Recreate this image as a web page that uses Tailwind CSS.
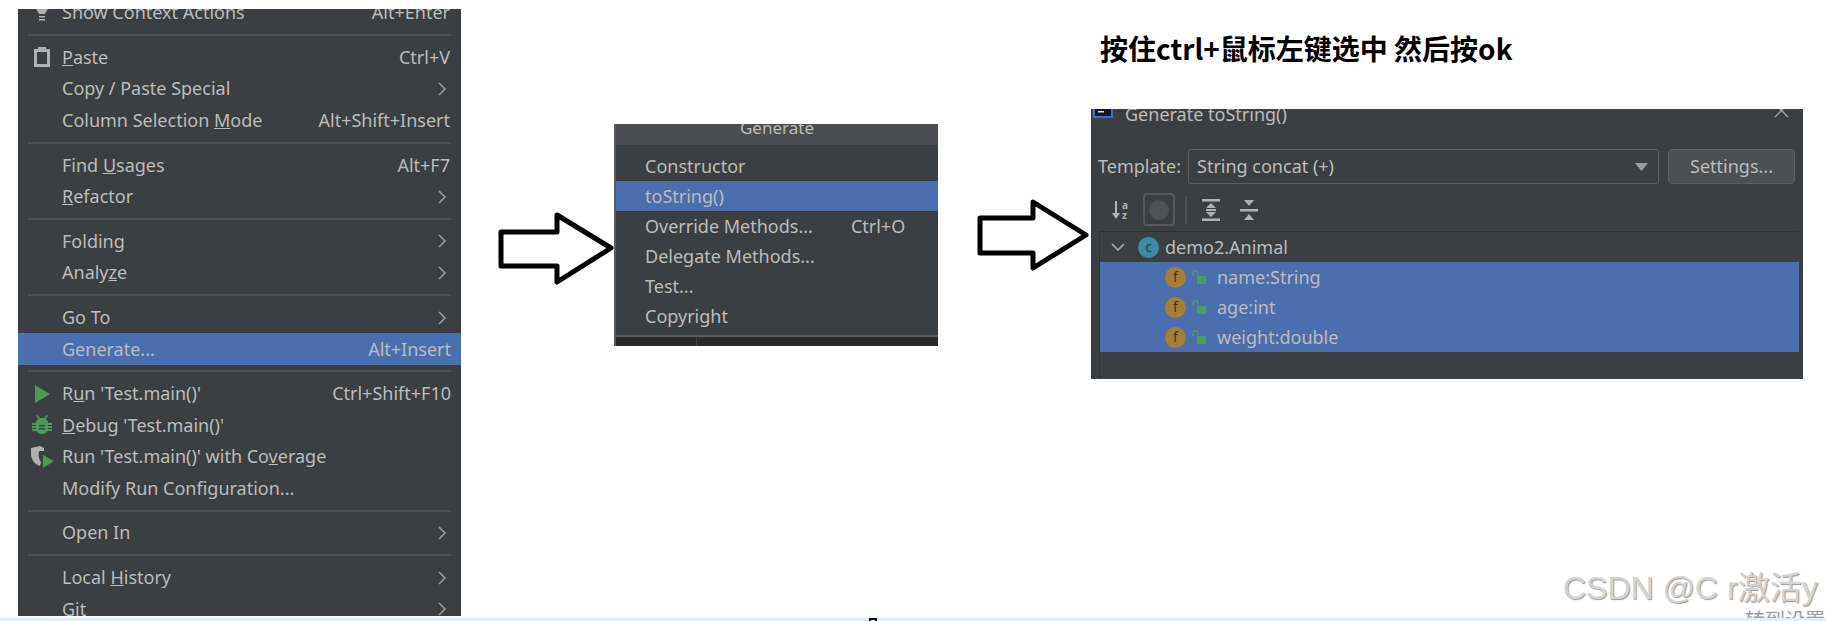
<!DOCTYPE html>
<html lang="zh">
<head>
    <meta charset="UTF-8">
    <title>Generate toString</title>
    <script src="https://cdn.jsdelivr.net/npm/@tailwindcss/browser@4"></script>
</head>
<body class="bg-white">
<div class="relative flex items-start w-[1826px] h-[621px] overflow-hidden bg-white font-['Noto_Sans','Noto_Sans_CJK_SC',sans-serif] text-[#bbbbbb] text-[18px]">

    <!-- context menu -->
    <div class="ml-[18px] mt-[9px] w-[443px] h-[607px] shrink-0 overflow-hidden bg-[#3c3f41]">
        <div class="mt-[-12px]">
            <div class="flex items-center h-[31.5px] pr-[11px]">
                <div class="w-[44px] pl-[4px] flex justify-center">
                    <svg width="16" height="22" viewBox="0 0 16 22"><path d="M1 3h14c0 4-3 6-4 9H5C4 9 1 7 1 3z" fill="#afb1b3"/><path d="M5 14h6v1.5H5zM5 17h6v1.5H5z" fill="#afb1b3"/></svg>
                </div>
                <span>Show Context Actions</span><span class="ml-auto">Alt+Enter</span>
            </div>
            <div class="h-[2px] mx-[10px] my-[5.6px] bg-[#515151]"></div>

            <div class="flex items-center h-[31.5px] pr-[11px]">
                <div class="w-[44px] pl-[4px] flex justify-center">
                    <svg width="16" height="20" viewBox="0 0 16 20"><path fill-rule="evenodd" d="M0 2h4V0h8v2h4v18H0zM3 5v12h10V5z" fill="#afb1b3"/></svg>
                </div>
                <span><u>P</u>aste</span><span class="ml-auto">Ctrl+V</span>
            </div>
            <div class="flex items-center h-[31.5px] pl-[44px] pr-[11px]">
                <span>Copy / Paste Special</span>
                <svg class="ml-auto mr-[3px]" width="9" height="14" viewBox="0 0 9 14" fill="none" stroke="#9a9c9e" stroke-width="1.5"><path d="M1 1l6 6-6 6"/></svg>
            </div>
            <div class="flex items-center h-[31.5px] pl-[44px] pr-[11px]">
                <span>Column Selection <u>M</u>ode</span><span class="ml-auto">Alt+Shift+Insert</span>
            </div>
            <div class="h-[2px] mx-[10px] my-[5.6px] bg-[#515151]"></div>

            <div class="flex items-center h-[31.5px] pl-[44px] pr-[11px]">
                <span>Find <u>U</u>sages</span><span class="ml-auto">Alt+F7</span>
            </div>
            <div class="flex items-center h-[31.5px] pl-[44px] pr-[11px]">
                <span><u>R</u>efactor</span>
                <svg class="ml-auto mr-[3px]" width="9" height="14" viewBox="0 0 9 14" fill="none" stroke="#9a9c9e" stroke-width="1.5"><path d="M1 1l6 6-6 6"/></svg>
            </div>
            <div class="h-[2px] mx-[10px] my-[5.6px] bg-[#515151]"></div>

            <div class="flex items-center h-[31.5px] pl-[44px] pr-[11px]">
                <span>Folding</span>
                <svg class="ml-auto mr-[3px]" width="9" height="14" viewBox="0 0 9 14" fill="none" stroke="#9a9c9e" stroke-width="1.5"><path d="M1 1l6 6-6 6"/></svg>
            </div>
            <div class="flex items-center h-[31.5px] pl-[44px] pr-[11px]">
                <span>Analy<u>z</u>e</span>
                <svg class="ml-auto mr-[3px]" width="9" height="14" viewBox="0 0 9 14" fill="none" stroke="#9a9c9e" stroke-width="1.5"><path d="M1 1l6 6-6 6"/></svg>
            </div>
            <div class="h-[2px] mx-[10px] my-[5.6px] bg-[#515151]"></div>

            <div class="flex items-center h-[31.5px] pl-[44px] pr-[11px]">
                <span>Go To</span>
                <svg class="ml-auto mr-[3px]" width="9" height="14" viewBox="0 0 9 14" fill="none" stroke="#9a9c9e" stroke-width="1.5"><path d="M1 1l6 6-6 6"/></svg>
            </div>
            <div class="flex items-center h-[31.5px] pl-[44px] pr-[10px] bg-[#4b6eaf]">
                <span>Generate...</span><span class="ml-auto">Alt+Insert</span>
            </div>
            <div class="h-[2px] mx-[10px] my-[5.6px] bg-[#515151]"></div>

            <div class="flex items-center h-[31.5px] pr-[10px]">
                <div class="w-[44px] pl-[4px] flex justify-center">
                    <svg width="16" height="18" viewBox="0 0 16 18"><path d="M1 0l15 9-15 9z" fill="#499c54"/></svg>
                </div>
                <span>R<u>u</u>n 'Test.main()'</span><span class="ml-auto">Ctrl+Shift+F10</span>
            </div>
            <div class="flex items-center h-[31.5px] pr-[11px]">
                <div class="w-[44px] pl-[4px] flex justify-center">
                    <svg width="20" height="20" viewBox="0 0 20 20"><path d="M5 0l3 3h4l3-3 1 1-2.500 3C15 5 16 6 16 7H4c0-1 1-2 2.500-3L4 1z" fill="#499c54"/><path fill-rule="evenodd" d="M0 8h4V7h12v1h4v2h-4v1h4v2h-4v1h4v2h-4.500c-1 2-3 3-5.500 3s-4.500-1-5.500-3H0v-2h4v-1H0v-2h4v-1H0zM7 10v1.500h6V10zM7 13v1.500h6V13z" fill="#499c54"/></svg>
                </div>
                <span><u>D</u>ebug 'Test.main()'</span>
            </div>
            <div class="flex items-center h-[31.5px] pr-[11px]">
                <div class="w-[44px] pl-[4px] flex justify-center">
                    <svg width="24" height="22" viewBox="0 0 24 22"><path d="M1 2l9-2 4 2v3h-4c-2 0-2 7 1 11l-1 4C4 18 1 13 1 8z" fill="#afb1b3"/><path d="M13 9l11 6-11 7z" fill="#499c54"/></svg>
                </div>
                <span>Run 'Test.main()' with Co<u>v</u>erage</span>
            </div>
            <div class="flex items-center h-[31.5px] pl-[44px] pr-[11px]">
                <span>Modify Run Configuration...</span>
            </div>
            <div class="h-[2px] mx-[10px] my-[5.6px] bg-[#515151]"></div>

            <div class="flex items-center h-[31.5px] pl-[44px] pr-[11px]">
                <span>Open In</span>
                <svg class="ml-auto mr-[3px]" width="9" height="14" viewBox="0 0 9 14" fill="none" stroke="#9a9c9e" stroke-width="1.5"><path d="M1 1l6 6-6 6"/></svg>
            </div>
            <div class="h-[2px] mx-[10px] my-[5.6px] bg-[#515151]"></div>

            <div class="flex items-center h-[31.5px] pl-[44px] pr-[11px]">
                <span>Local <u>H</u>istory</span>
                <svg class="ml-auto mr-[3px]" width="9" height="14" viewBox="0 0 9 14" fill="none" stroke="#9a9c9e" stroke-width="1.5"><path d="M1 1l6 6-6 6"/></svg>
            </div>
            <div class="flex items-center h-[31.5px] pl-[44px] pr-[11px]">
                <span>Git</span>
                <svg class="ml-auto mr-[3px]" width="9" height="14" viewBox="0 0 9 14" fill="none" stroke="#9a9c9e" stroke-width="1.5"><path d="M1 1l6 6-6 6"/></svg>
            </div>
        </div>
    </div>

    <!-- arrow 1 -->
    <svg class="ml-[37px] mt-[210px] shrink-0" width="119" height="78" viewBox="0 0 119 78" fill="#fff" stroke="#000" stroke-width="5" stroke-linejoin="round"><path d="M3 22h56V5l54 33-54 34V56H3z"/></svg>

    <!-- generate popup -->
    <div class="ml-[-3px] mt-[124px] w-[324px] h-[222px] shrink-0 flex flex-col overflow-hidden bg-[#3c3f41] border-l-2 border-[#5a5a5a]">
        <div class="h-[21px] shrink-0 bg-[#4b4d50] text-center leading-[8px] text-[17px]">Generate</div>
        <div class="flex flex-col pt-[6px] text-[18px]">
            <div class="flex items-center h-[30px] pl-[29px]">Constructor</div>
            <div class="flex items-center h-[30px] pl-[29px] bg-[#4b6eaf]">toString()</div>
            <div class="flex items-center h-[30px] pl-[29px]">
                <span>Override Methods...</span><span class="ml-[38px]">Ctrl+O</span>
            </div>
            <div class="flex items-center h-[30px] pl-[29px]">Delegate Methods...</div>
            <div class="flex items-center h-[30px] pl-[29px]">Test...</div>
            <div class="flex items-center h-[30px] pl-[29px]">Copyright</div>
        </div>
        <div class="mt-auto flex h-[11px] shrink-0 border-t-2 border-[#5a5a5a] bg-[#2b2b2b]">
            <div class="w-[81px] border-r border-[#444444]"></div>
        </div>
    </div>

    <!-- arrow 2 -->
    <svg class="ml-[39px] mt-[198px] shrink-0" width="116" height="74" viewBox="0 0 116 74" fill="#fff" stroke="#000" stroke-width="5" stroke-linejoin="round"><path d="M3 20h53V4l53 33-53 33V55H3z"/></svg>

    <!-- heading + toString dialog -->
    <div class="ml-[-2px] shrink-0 w-[712px] flex flex-col">
        <div class="h-[109px] pt-[25px] pl-[9px] font-['Noto_Sans_CJK_SC',sans-serif] text-[28px] leading-[46px] font-bold text-black">按住ctrl+鼠标左键选中 然后按ok</div>
        <div class="h-[270px] flex flex-col overflow-hidden bg-[#3c3f41]">
            <div class="flex items-center h-[10px] shrink-0">
                <svg class="ml-[2px] mt-[-8px]" width="20" height="16" viewBox="0 0 20 16"><rect width="20" height="16" fill="#3b6fd8"/><rect x="2" width="16" height="14" fill="#1b1226"/><rect x="5" y="9" width="6" height="1.500" fill="#ddd"/></svg>
                <span class="ml-[12px] text-[18px] leading-[6px]">Generate toString()</span>
                <svg class="ml-auto mr-[14px] mt-[-6px]" width="15" height="15" viewBox="0 0 15 15" fill="none" stroke="#9a9c9e" stroke-width="1.500"><path d="M1 0l13 13M14 0L1 13"/></svg>
            </div>
            <div class="flex items-center mt-[30px] h-[35px] shrink-0 pl-[7px] pr-[8px]">
                <span class="w-[90px]">Template:</span>
                <div class="flex items-center w-[471px] h-[35px] pl-[8px] pr-[10px] rounded-[3px] border border-[#5e6060]">
                    <span>String concat (+)</span>
                    <svg class="ml-auto" width="13" height="8" viewBox="0 0 13 8"><path d="M0 0h13L6.500 8z" fill="#9a9c9e"/></svg>
                </div>
                <div class="flex items-center justify-center ml-[9px] w-[127px] h-[35px] rounded-[4px] bg-[#4c5052] border border-[#5e6060]">Settings...</div>
            </div>
            <div class="flex items-center h-[33px] mt-[9px] shrink-0">
                <svg class="ml-[20px]" width="20" height="20" viewBox="0 0 20 20" fill="#afb1b3"><path d="M4 1h2v12h3l-4 6-4-6h3z"/><text x="11" y="9" font-size="10" font-weight="700" font-family="Noto Sans">a</text><text x="11" y="19" font-size="10" font-weight="700" font-family="Noto Sans">z</text></svg>
                <div class="flex items-center justify-center ml-[12px] w-[32px] h-[33px] rounded-[4px] border-2 border-[#55585a] bg-[#3c3f41]">
                    <div class="w-[20px] h-[20px] rounded-full bg-[#4f5153]"></div>
                </div>
                <div class="ml-[10px] w-[2px] h-[28px] bg-[#515151]"></div>
                <svg class="ml-[14px]" width="20" height="22" viewBox="0 0 20 22" fill="#afb1b3"><path d="M1 0h18v2.500H1zM1 19.500h18V22H1zM10 4l5 5H5zM10 18l-5-5h10zM5 10h10v2H5z"/></svg>
                <svg class="ml-[18px]" width="20" height="20" viewBox="0 0 20 20" fill="#afb1b3"><path d="M1 9h18v2.500H1zM5 0h10l-5 6zM10 14l5 6H5z"/></svg>
            </div>
            <div class="flex-1 ml-[8px] mr-[4px] mt-[5px] flex flex-col border-l border-t border-[#323232]">
                <div class="flex items-center h-[30px] shrink-0">
                    <svg class="ml-[11px]" width="14" height="9" viewBox="0 0 14 9" fill="none" stroke="#9a9c9e" stroke-width="1.800"><path d="M1 1l6 6 6-6"/></svg>
                    <div class="ml-[13px] flex items-center justify-center w-[21px] h-[21px] rounded-full bg-[#3d8aa6] text-[14px] leading-none text-[#2d3c44]">c</div>
                    <span class="ml-[6px]">demo2.Animal</span>
                </div>
                <div class="flex items-center h-[30px] shrink-0 bg-[#4b6eaf]">
                    <div class="ml-[65px] flex items-center justify-center w-[21px] h-[21px] rounded-full bg-[#a57e37] text-[14px] leading-none text-[#3e3524]">f</div>
                    <svg class="ml-[6px]" width="14" height="14" viewBox="0 0 14 14"><path d="M5 6h9v8H5z" fill="#4f9a5c"/><path d="M1 6V3c0-3 5-3 5 0v2" fill="none" stroke="#4f9a5c" stroke-width="1.500"/></svg>
                    <span class="ml-[11px]">name:String</span>
                </div>
                <div class="flex items-center h-[30px] shrink-0 bg-[#4b6eaf]">
                    <div class="ml-[65px] flex items-center justify-center w-[21px] h-[21px] rounded-full bg-[#a57e37] text-[14px] leading-none text-[#3e3524]">f</div>
                    <svg class="ml-[6px]" width="14" height="14" viewBox="0 0 14 14"><path d="M5 6h9v8H5z" fill="#4f9a5c"/><path d="M1 6V3c0-3 5-3 5 0v2" fill="none" stroke="#4f9a5c" stroke-width="1.500"/></svg>
                    <span class="ml-[11px]">age:int</span>
                </div>
                <div class="flex items-center h-[30px] shrink-0 bg-[#4b6eaf]">
                    <div class="ml-[65px] flex items-center justify-center w-[21px] h-[21px] rounded-full bg-[#a57e37] text-[14px] leading-none text-[#3e3524]">f</div>
                    <svg class="ml-[6px]" width="14" height="14" viewBox="0 0 14 14"><path d="M5 6h9v8H5z" fill="#4f9a5c"/><path d="M1 6V3c0-3 5-3 5 0v2" fill="none" stroke="#4f9a5c" stroke-width="1.500"/></svg>
                    <span class="ml-[11px]">weight:double</span>
                </div>
            </div>
        </div>
    </div>

    <!-- watermark over the page -->
    <div class="absolute left-[1563px] top-[566px] whitespace-nowrap font-['Liberation_Sans','Noto_Sans_CJK_SC',sans-serif] text-[32px] leading-[44px] text-[#d4d4d4] [text-shadow:1px_1px_1px_#9a9a9a]">CSDN @C r激活y</div>
    <div class="absolute left-[1745px] top-[609px] whitespace-nowrap text-[20px] leading-[24px] text-[#9a9a9a]">转到设置</div>

    <!-- bottom strip -->
    <div class="absolute left-0 bottom-0 w-full h-[3px] bg-[#e4eff3]"></div>
    <div class="absolute left-[869px] bottom-0 w-[8px] h-[3px] bg-white border-2 border-b-0 border-black"></div>
</div>
</body>
</html>
